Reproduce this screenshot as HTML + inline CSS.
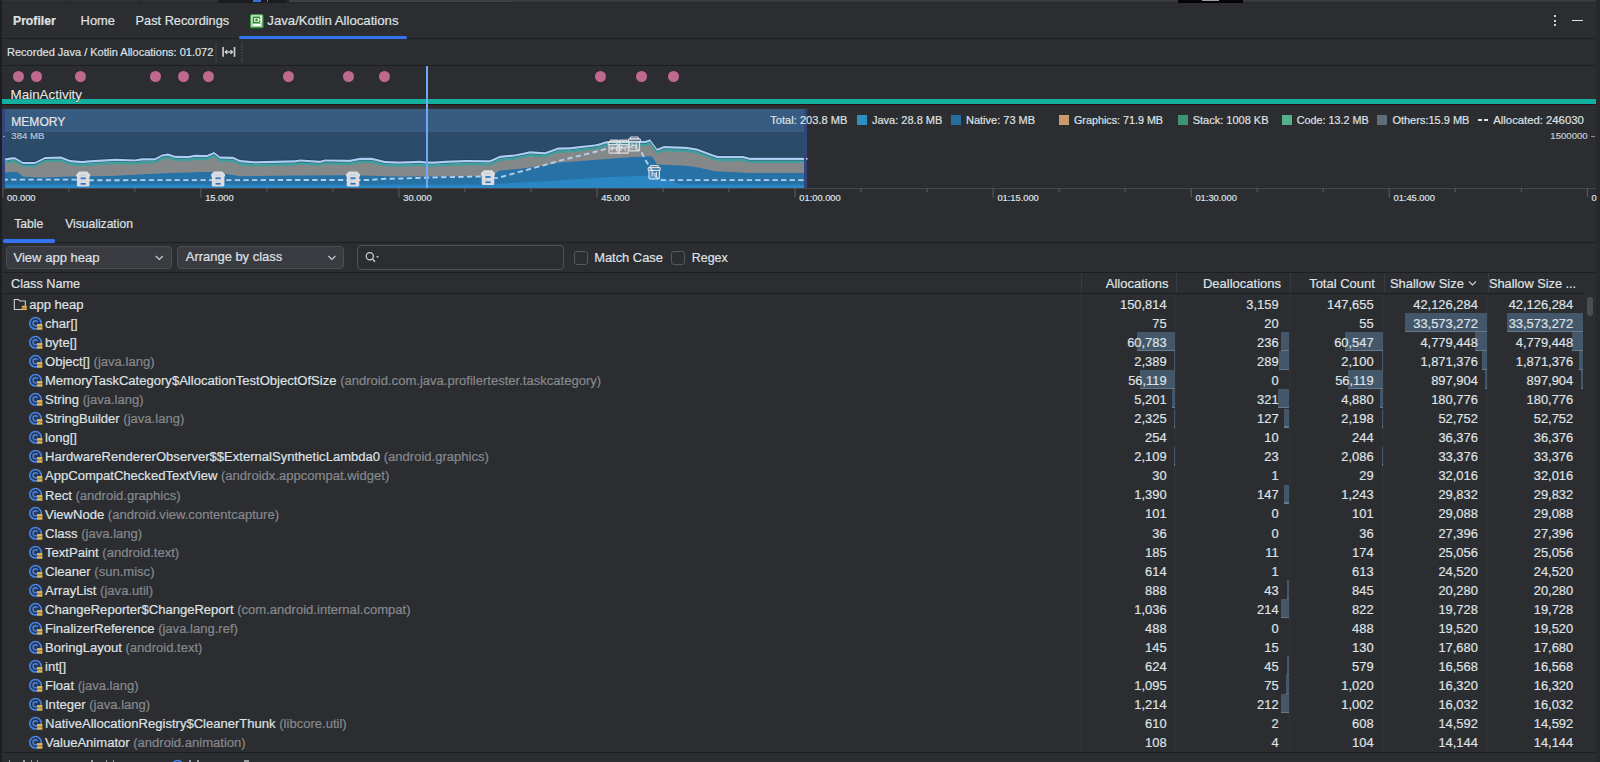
<!DOCTYPE html><html><head><meta charset="utf-8"><style>
html,body{margin:0;padding:0;}
body{width:1600px;height:762px;overflow:hidden;background:#2b2d30;position:relative;font-family:"Liberation Sans", sans-serif;}
.t{position:absolute;white-space:pre;line-height:1;-webkit-text-stroke:0.2px currentColor;}
.r{position:absolute;}
svg{position:absolute;left:0;top:0;}
</style></head><body>
<div class="r" style="left:0px;top:0px;width:1600px;height:3px;background:#25272a;"></div>
<div class="r" style="left:2px;top:0px;width:216px;height:2.4px;background:#2f3135;"></div>
<div class="r" style="left:70px;top:0px;width:1px;height:2.4px;background:#222326;"></div>
<div class="r" style="left:139px;top:0px;width:1px;height:2.4px;background:#222326;"></div>
<div class="r" style="left:218px;top:0px;width:69px;height:2.5px;background:#1c1d20;"></div>
<div class="r" style="left:253px;top:0px;width:8px;height:2.2px;background:#3a6fd8;"></div>
<div class="r" style="left:267px;top:0px;width:1px;height:2.2px;background:#d04040;"></div>
<div class="r" style="left:289px;top:0px;width:223px;height:2.4px;background:#3d3f43;"></div>
<div class="r" style="left:512px;top:0px;width:666px;height:2.4px;background:#393b3f;"></div>
<div class="r" style="left:1178px;top:0px;width:65px;height:2.6px;background:#050505;"></div>
<div class="r" style="left:1202px;top:0px;width:17px;height:1px;background:#a0a0a0;"></div>
<div class="r" style="left:1243px;top:0px;width:353px;height:2.4px;background:#393b3f;"></div>
<div class="r" style="left:0px;top:0px;width:2px;height:762px;background:#1e1f22;"></div>
<div class="r" style="left:1596px;top:0px;width:4px;height:762px;background:#26282b;"></div>
<div class="t" style="left:13px;top:15.02px;font-size:12.2px;color:#dfe1e5;font-weight:bold;">Profiler</div>
<div class="t" style="left:80.6px;top:14.93px;font-size:12.9px;color:#dfe1e5;font-weight:normal;">Home</div>
<div class="t" style="left:135.6px;top:14.96px;font-size:12.75px;color:#dfe1e5;font-weight:normal;">Past Recordings</div>
<div class="t" style="left:267.3px;top:13.98px;font-size:13.2px;color:#dfe1e5;font-weight:normal;">Java/Kotlin Allocations</div>
<div class="r" style="left:2px;top:38px;width:1594px;height:1px;background:#1e1f22;"></div>
<div class="r" style="left:239px;top:36px;width:168px;height:3px;background:#3574f0;border-radius:1.5px"></div>
<svg width="1600" height="40" style="left:0;top:0">
<rect x="250.6" y="14.6" width="12.3" height="13" rx="1.2" fill="#e9eee9" stroke="#3b9b3d" stroke-width="1.3"/>
<path d="M259.8 17.2 H253.4 V22.4 H259.8" fill="none" stroke="#2f8f33" stroke-width="1.5"/>
<circle cx="256.6" cy="19.8" r="1.3" fill="#2f8f33"/>
<rect x="259" y="17.8" width="1.4" height="1.4" fill="#2f8f33"/><rect x="259" y="20.6" width="1.4" height="1.4" fill="#2f8f33"/>
<rect x="252.2" y="23.6" width="9" height="2.8" fill="#ffffff" stroke="#5aaa5c" stroke-width="0.6"/>
</svg>
<div class="r" style="left:1554px;top:15px;width:2px;height:2px;background:#cfd1d5;"></div>
<div class="r" style="left:1554px;top:19.5px;width:2px;height:2px;background:#cfd1d5;"></div>
<div class="r" style="left:1554px;top:24px;width:2px;height:2px;background:#cfd1d5;"></div>
<div class="r" style="left:1572px;top:20px;width:11px;height:1.3px;background:#dfe1e5;"></div>
<div class="t" style="left:7px;top:46.62px;font-size:11.02px;color:#dfe1e5;font-weight:normal;">Recorded Java / Kotlin Allocations: 01.072</div>
<svg width="1600" height="70" style="left:0;top:0">
<line x1="216" y1="43" x2="216" y2="62" stroke="#5a5d63" stroke-width="1" stroke-dasharray="1.5 1.5"/>
<line x1="242" y1="43" x2="242" y2="62" stroke="#5a5d63" stroke-width="1" stroke-dasharray="1.5 1.5"/>
<line x1="223.1" y1="47" x2="223.1" y2="56.8" stroke="#c9cbcf" stroke-width="1.7"/>
<line x1="234.5" y1="47" x2="234.5" y2="56.8" stroke="#c9cbcf" stroke-width="1.7"/>
<line x1="225.5" y1="52" x2="232.3" y2="52" stroke="#dfe1e5" stroke-width="1.2"/>
<path d="M227.3 50.2 L225.3 52 L227.3 53.8 M230.5 50.2 L232.5 52 L230.5 53.8" fill="none" stroke="#dfe1e5" stroke-width="1.2"/>
</svg>
<div class="r" style="left:2px;top:65px;width:1594px;height:1px;background:#1e1f22;"></div>
<div class="r" style="left:13.2px;top:70.8px;width:11px;height:11px;background:#c0698f;border-radius:50%"></div>
<div class="r" style="left:31.0px;top:70.8px;width:11px;height:11px;background:#c0698f;border-radius:50%"></div>
<div class="r" style="left:75.3px;top:70.8px;width:11px;height:11px;background:#c0698f;border-radius:50%"></div>
<div class="r" style="left:149.5px;top:70.8px;width:11px;height:11px;background:#c0698f;border-radius:50%"></div>
<div class="r" style="left:177.5px;top:70.8px;width:11px;height:11px;background:#c0698f;border-radius:50%"></div>
<div class="r" style="left:203.0px;top:70.8px;width:11px;height:11px;background:#c0698f;border-radius:50%"></div>
<div class="r" style="left:282.5px;top:70.8px;width:11px;height:11px;background:#c0698f;border-radius:50%"></div>
<div class="r" style="left:342.5px;top:70.8px;width:11px;height:11px;background:#c0698f;border-radius:50%"></div>
<div class="r" style="left:379.0px;top:70.8px;width:11px;height:11px;background:#c0698f;border-radius:50%"></div>
<div class="r" style="left:595.0px;top:70.8px;width:11px;height:11px;background:#c0698f;border-radius:50%"></div>
<div class="r" style="left:636.0px;top:70.8px;width:11px;height:11px;background:#c0698f;border-radius:50%"></div>
<div class="r" style="left:668.0px;top:70.8px;width:11px;height:11px;background:#c0698f;border-radius:50%"></div>
<div class="r" style="left:2px;top:99px;width:1594px;height:5px;background:#13b0a0;"></div>
<div class="r" style="left:2px;top:104px;width:1594px;height:1px;background:#2a1119;"></div>
<div class="r" style="left:2px;top:108px;width:1594px;height:1px;background:#333230;"></div>
<div class="t" style="left:10.6px;top:88.41px;font-size:13.4px;color:#e6e7e9;font-weight:normal;text-shadow:0 0 1px #000,0 0 1px #000">MainActivity</div>
<svg width="1600" height="210" style="left:0;top:0"><rect x="5" y="109" width="799" height="23" fill="#375b81"/><rect x="5" y="132" width="799" height="56" fill="#2c4b69"/><polygon points="5,188 5.0,157.65 12.0,156.40 15.0,156.40 23.0,161.00 35.0,161.00 45.0,156.00 61.0,155.65 70.0,159.15 82.0,160.15 90.0,159.40 115.0,157.90 135.0,158.50 142.0,157.30 155.0,157.30 162.0,153.50 168.0,152.65 175.0,154.80 188.0,155.15 195.0,153.90 207.0,154.15 214.0,151.00 220.0,155.65 233.0,155.90 240.0,159.15 255.0,160.40 275.0,159.90 295.0,159.40 300.0,158.50 320.0,159.80 325.0,158.50 350.0,158.90 360.0,156.90 372.0,156.90 385.0,160.15 400.0,160.65 420.0,159.80 427.0,160.65 435.0,160.65 445.0,159.80 465.0,159.15 490.0,159.40 500.0,154.80 515.0,153.50 530.0,150.40 545.0,151.40 558.0,146.65 570.0,146.40 580.0,145.15 595.0,143.50 600.0,142.40 605.0,140.60 615.0,139.30 640.0,139.90 645.0,140.20 650.0,138.40 657.0,147.90 664.0,145.20 686.0,145.90 697.0,147.60 713.0,153.70 718.0,155.10 743.0,155.10 750.0,156.80 804.0,156.80 804,188" fill="#1e3d5e"/><polygon points="5,188 5.0,158.55 12.0,157.30 15.0,157.30 23.0,161.90 35.0,161.90 45.0,156.90 61.0,156.55 70.0,160.05 82.0,161.05 90.0,160.30 115.0,158.80 135.0,159.40 142.0,158.20 155.0,158.20 162.0,154.40 168.0,153.55 175.0,155.70 188.0,156.05 195.0,154.80 207.0,155.05 214.0,151.90 220.0,156.55 233.0,156.80 240.0,160.05 255.0,161.30 275.0,160.80 295.0,160.30 300.0,159.40 320.0,160.70 325.0,159.40 350.0,159.80 360.0,157.80 372.0,157.80 385.0,161.05 400.0,161.55 420.0,160.70 427.0,161.55 435.0,161.55 445.0,160.70 465.0,160.05 490.0,160.30 500.0,155.70 515.0,154.40 530.0,151.30 545.0,152.30 558.0,147.55 570.0,147.30 580.0,146.05 595.0,144.40 600.0,143.30 605.0,141.50 615.0,140.20 640.0,140.80 645.0,141.10 650.0,139.30 657.0,148.80 664.0,146.10 686.0,146.80 697.0,148.50 713.0,154.60 718.0,156.00 743.0,156.00 750.0,157.70 804.0,157.70 804,188" fill="#aacdf0"/><polygon points="5,188 5.0,160.75 12.0,159.50 15.0,159.50 23.0,164.10 35.0,164.10 45.0,159.10 61.0,158.75 70.0,162.25 82.0,163.25 90.0,162.50 115.0,161.00 135.0,161.60 142.0,160.40 155.0,160.40 162.0,156.60 168.0,155.75 175.0,157.90 188.0,158.25 195.0,157.00 207.0,157.25 214.0,154.10 220.0,158.75 233.0,159.00 240.0,162.25 255.0,163.50 275.0,163.00 295.0,162.50 300.0,161.60 320.0,162.90 325.0,161.60 350.0,162.00 360.0,160.00 372.0,160.00 385.0,163.25 400.0,163.75 420.0,162.90 427.0,163.75 435.0,163.75 445.0,162.90 465.0,162.25 490.0,162.50 500.0,157.90 515.0,156.60 530.0,153.50 545.0,154.50 558.0,149.75 570.0,149.50 580.0,148.25 595.0,146.60 600.0,145.50 605.0,143.70 615.0,142.40 640.0,143.00 645.0,143.30 650.0,141.50 657.0,151.00 664.0,148.30 686.0,149.00 697.0,150.70 713.0,156.80 718.0,158.20 743.0,158.20 750.0,159.90 804.0,159.90 804,188" fill="#2f5578"/><polygon points="5,188 5.0,161.35 12.0,160.10 15.0,160.10 23.0,164.70 35.0,164.70 45.0,159.70 61.0,159.35 70.0,162.85 82.0,163.85 90.0,163.10 115.0,161.60 135.0,162.20 142.0,161.00 155.0,161.00 162.0,157.20 168.0,156.35 175.0,158.50 188.0,158.85 195.0,157.60 207.0,157.85 214.0,154.70 220.0,159.35 233.0,159.60 240.0,162.85 255.0,164.10 275.0,163.60 295.0,163.10 300.0,162.20 320.0,163.50 325.0,162.20 350.0,162.60 360.0,160.60 372.0,160.60 385.0,163.85 400.0,164.35 420.0,163.50 427.0,164.35 435.0,164.35 445.0,163.50 465.0,162.85 490.0,163.10 500.0,158.50 515.0,157.20 530.0,154.10 545.0,155.10 558.0,150.35 570.0,150.10 580.0,148.85 595.0,147.20 600.0,146.10 605.0,144.30 615.0,143.00 640.0,143.60 645.0,143.90 650.0,142.10 657.0,151.60 664.0,148.90 686.0,149.60 697.0,151.30 713.0,157.40 718.0,158.80 743.0,158.80 750.0,160.50 804.0,160.50 804,188" fill="#3e9f9c"/><polygon points="5,188 5.0,163.75 12.0,162.50 15.0,162.50 23.0,167.10 35.0,167.10 45.0,162.10 61.0,161.75 70.0,165.25 82.0,166.25 90.0,165.50 115.0,164.00 135.0,164.60 142.0,163.40 155.0,163.40 162.0,159.60 168.0,158.75 175.0,160.90 188.0,161.25 195.0,160.00 207.0,160.25 214.0,157.10 220.0,161.75 233.0,162.00 240.0,165.25 255.0,166.50 275.0,166.00 295.0,165.50 300.0,164.60 320.0,165.90 325.0,164.60 350.0,165.00 360.0,163.00 372.0,163.00 385.0,166.25 400.0,166.75 420.0,165.90 427.0,166.75 435.0,166.75 445.0,165.90 465.0,165.25 490.0,165.50 500.0,160.90 515.0,159.60 530.0,156.50 545.0,157.50 558.0,152.75 570.0,152.50 580.0,151.25 595.0,149.60 600.0,148.50 605.0,146.70 615.0,145.40 640.0,146.00 645.0,146.30 650.0,144.50 657.0,154.00 664.0,151.30 686.0,152.00 697.0,153.70 713.0,159.80 718.0,161.20 743.0,161.20 750.0,162.90 804.0,162.90 804,188" fill="#858889"/><polygon points="5,188 5.0,172.50 12.0,171.90 17.0,172.00 23.0,176.50 40.0,177.50 70.0,176.60 110.0,176.00 140.0,174.40 170.0,173.10 190.0,172.50 200.0,171.90 215.0,172.00 240.0,176.25 300.0,175.60 350.0,175.25 400.0,176.50 490.0,176.25 500.0,170.60 520.0,168.75 545.0,165.60 558.0,162.75 600.0,159.40 630.0,157.20 652.0,156.20 657.0,164.40 685.0,165.70 697.0,167.30 715.0,171.20 750.0,172.90 804.0,172.90 804,188" fill="#2672a7"/><polygon points="5,188 5.0,184.50 400.0,184.75 480.0,184.80 560.0,180.60 600.0,177.50 650.0,175.60 657.0,176.00 680.0,184.50 804.0,184.70 804,188" fill="#2a87c4"/><polyline points="5.0,179.60 75.0,179.60 90.0,180.20 370.0,180.00 385.0,178.75 400.0,178.60 430.0,177.50 480.0,176.50 488.0,177.00 497.0,178.10 540.0,166.25 547.0,164.40 560.0,160.60 600.0,150.60 605.0,149.30 614.0,147.50 634.0,146.50 642.0,153.20 646.0,161.00 652.0,170.30 655.0,176.00 660.0,180.10 804.0,180.10" fill="none" stroke="#b3cfee" stroke-width="1.9" stroke-dasharray="5.2 3.4" stroke-dashoffset="2.35"/><rect x="2" y="109" width="3" height="79" fill="#32457c"/><rect x="804" y="109" width="3" height="79" fill="#32457c"/><rect x="806" y="158" width="1.5" height="1.5" fill="#dfe1e5"/><path d="M79.00 171.60 H87.40 L89.70 174.20 H90.20 V176.60 H89.50 V185.10 Q89.50 186.60 88.00 186.60 H78.40 Q76.90 186.60 76.90 185.10 V176.60 H76.20 V174.20 H76.70 Z" fill="#dcdde0"/><rect x="80.20" y="174.80" width="6" height="0.6" fill="#a9c2dc"/><rect x="80.60" y="177.40" width="5.2" height="1.9" fill="#3f7cc2"/><rect x="80.60" y="183.00" width="5.2" height="1.7" fill="#2f72c0"/><rect x="81.00" y="179.90" width="0.8" height="3.00" fill="#b4c8de"/><path d="M213.90 171.50 H222.30 L224.60 174.10 H225.10 V176.50 H224.40 V185.00 Q224.40 186.50 222.90 186.50 H213.30 Q211.80 186.50 211.80 185.00 V176.50 H211.10 V174.10 H211.60 Z" fill="#dcdde0"/><rect x="215.10" y="174.70" width="6" height="0.6" fill="#a9c2dc"/><rect x="215.50" y="177.30" width="5.2" height="1.9" fill="#3f7cc2"/><rect x="215.50" y="182.90" width="5.2" height="1.7" fill="#2f72c0"/><rect x="215.90" y="179.80" width="0.8" height="3.00" fill="#b4c8de"/><path d="M348.80 171.50 H357.20 L359.50 174.10 H360.00 V176.50 H359.30 V185.00 Q359.30 186.50 357.80 186.50 H348.20 Q346.70 186.50 346.70 185.00 V176.50 H346.00 V174.10 H346.50 Z" fill="#dcdde0"/><rect x="350.00" y="174.70" width="6" height="0.6" fill="#a9c2dc"/><rect x="350.40" y="177.30" width="5.2" height="1.9" fill="#3f7cc2"/><rect x="350.40" y="182.90" width="5.2" height="1.7" fill="#2f72c0"/><rect x="350.80" y="179.80" width="0.8" height="3.00" fill="#b4c8de"/><path d="M483.80 170.20 H492.20 L494.50 172.80 H495.00 V175.20 H494.30 V183.50 Q494.30 185.00 492.80 185.00 H483.20 Q481.70 185.00 481.70 183.50 V175.20 H481.00 V172.80 H481.50 Z" fill="#dcdde0"/><rect x="485.00" y="173.40" width="6" height="0.6" fill="#a9c2dc"/><rect x="485.40" y="176.00" width="5.2" height="1.9" fill="#3f7cc2"/><rect x="485.40" y="181.40" width="5.2" height="1.7" fill="#2f72c0"/><rect x="485.80" y="178.50" width="0.8" height="2.80" fill="#b4c8de"/><path d="M610.80 140.10 H617.60 L618.80 141.90 H609.60 Z" fill="none" stroke="#dcdde0" stroke-width="1.2" stroke-linejoin="round"/><rect x="608.20" y="142.10" width="12" height="2.6" rx="0.8" fill="none" stroke="#dcdde0" stroke-width="1.2"/><path d="M609.00 144.70 V152.20 Q609.00 153.20 610.20 153.20 H618.20 Q619.40 153.20 619.40 152.20 V144.70" fill="rgba(220,221,224,0.15)" stroke="#dcdde0" stroke-width="1.2"/><path d="M612.00 146.30 V151.00 M616.40 146.30 V151.00 M612.00 148.15 H616.40" stroke="#dcdde0" stroke-width="1.2" fill="none"/><path d="M619.70 140.10 H626.50 L627.70 141.90 H618.50 Z" fill="none" stroke="#dcdde0" stroke-width="1.2" stroke-linejoin="round"/><rect x="617.10" y="142.10" width="12" height="2.6" rx="0.8" fill="none" stroke="#dcdde0" stroke-width="1.2"/><path d="M617.90 144.70 V152.20 Q617.90 153.20 619.10 153.20 H627.10 Q628.30 153.20 628.30 152.20 V144.70" fill="rgba(220,221,224,0.15)" stroke="#dcdde0" stroke-width="1.2"/><path d="M620.90 146.30 V151.00 M625.30 146.30 V151.00 M620.90 148.15 H625.30" stroke="#dcdde0" stroke-width="1.2" fill="none"/><path d="M630.90 137.00 H637.70 L638.90 138.80 H629.70 Z" fill="none" stroke="#dcdde0" stroke-width="1.2" stroke-linejoin="round"/><rect x="628.30" y="139.00" width="12" height="2.6" rx="0.8" fill="none" stroke="#dcdde0" stroke-width="1.2"/><path d="M629.10 141.60 V149.90 Q629.10 150.90 630.30 150.90 H638.30 Q639.50 150.90 639.50 149.90 V141.60" fill="rgba(220,221,224,0.15)" stroke="#dcdde0" stroke-width="1.2"/><path d="M632.10 143.20 V148.70 M636.50 143.20 V148.70 M632.10 145.45 H636.50" stroke="#dcdde0" stroke-width="1.2" fill="none"/><path d="M650.80 165.70 H657.60 L658.80 167.50 H649.60 Z" fill="none" stroke="#dcdde0" stroke-width="1.2" stroke-linejoin="round"/><rect x="648.20" y="167.70" width="12" height="2.6" rx="0.8" fill="none" stroke="#dcdde0" stroke-width="1.2"/><path d="M649.00 170.30 V177.80 Q649.00 178.80 650.20 178.80 H658.20 Q659.40 178.80 659.40 177.80 V170.30" fill="rgba(220,221,224,0.15)" stroke="#dcdde0" stroke-width="1.2"/><path d="M652.00 171.90 V176.60 M656.40 171.90 V176.60 M652.00 173.75 H656.40" stroke="#dcdde0" stroke-width="1.2" fill="none"/><rect x="426" y="66" width="2" height="122.5" fill="#6fa8f4"/><rect x="2" y="188" width="1594" height="1" fill="#45474b"/><rect x="2.30" y="188" width="1" height="9.5" fill="#5b5e63"/><rect x="68.32" y="188" width="1" height="4.5" fill="#5b5e63"/><rect x="134.34" y="188" width="1" height="4.5" fill="#5b5e63"/><rect x="200.36" y="188" width="1" height="9.5" fill="#5b5e63"/><rect x="266.38" y="188" width="1" height="4.5" fill="#5b5e63"/><rect x="332.40" y="188" width="1" height="4.5" fill="#5b5e63"/><rect x="398.42" y="188" width="1" height="9.5" fill="#5b5e63"/><rect x="464.44" y="188" width="1" height="4.5" fill="#5b5e63"/><rect x="530.46" y="188" width="1" height="4.5" fill="#5b5e63"/><rect x="596.48" y="188" width="1" height="9.5" fill="#5b5e63"/><rect x="662.50" y="188" width="1" height="4.5" fill="#5b5e63"/><rect x="728.52" y="188" width="1" height="4.5" fill="#5b5e63"/><rect x="794.54" y="188" width="1" height="9.5" fill="#5b5e63"/><rect x="860.56" y="188" width="1" height="4.5" fill="#5b5e63"/><rect x="926.58" y="188" width="1" height="4.5" fill="#5b5e63"/><rect x="992.60" y="188" width="1" height="9.5" fill="#5b5e63"/><rect x="1058.62" y="188" width="1" height="4.5" fill="#5b5e63"/><rect x="1124.64" y="188" width="1" height="4.5" fill="#5b5e63"/><rect x="1190.66" y="188" width="1" height="9.5" fill="#5b5e63"/><rect x="1256.68" y="188" width="1" height="4.5" fill="#5b5e63"/><rect x="1322.70" y="188" width="1" height="4.5" fill="#5b5e63"/><rect x="1388.72" y="188" width="1" height="9.5" fill="#5b5e63"/><rect x="1454.74" y="188" width="1" height="4.5" fill="#5b5e63"/><rect x="1520.76" y="188" width="1" height="4.5" fill="#5b5e63"/><rect x="1586.78" y="188" width="1" height="9.5" fill="#5b5e63"/><rect x="1591" y="136" width="4" height="1" fill="#8a8d92"/><rect x="3" y="136" width="2" height="1" fill="#8ba6c4"/></svg>
<div class="t" style="left:11.2px;top:115.61px;font-size:12.1px;color:#e3e6ea;font-weight:normal;">MEMORY</div>
<div class="t" style="left:11.3px;top:131.42px;font-size:9.6px;color:#b7c6d6;font-weight:normal;">384 MB</div>
<div class="t" style="left:770.3px;top:114.75px;font-size:11.1px;color:#dfe1e5;font-weight:normal;">Total: 203.8 MB</div>
<div class="r" style="left:857px;top:115.3px;width:10px;height:9.5px;background:#2d8ec2;"></div>
<div class="t" style="left:872px;top:114.84px;font-size:11.0px;color:#dfe1e5;font-weight:normal;">Java: 28.8 MB</div>
<div class="r" style="left:951.3px;top:115.3px;width:10px;height:9.5px;background:#27709e;"></div>
<div class="t" style="left:966px;top:114.84px;font-size:11.0px;color:#dfe1e5;font-weight:normal;">Native: 73 MB</div>
<div class="r" style="left:1058.8px;top:115.3px;width:10px;height:9.5px;background:#c79a6b;"></div>
<div class="t" style="left:1074px;top:114.75px;font-size:10.75px;color:#dfe1e5;font-weight:normal;">Graphics: 71.9 MB</div>
<div class="r" style="left:1178px;top:115.3px;width:10px;height:9.5px;background:#3c9472;"></div>
<div class="t" style="left:1192.7px;top:114.84px;font-size:11.0px;color:#dfe1e5;font-weight:normal;">Stack: 1008 KB</div>
<div class="r" style="left:1282px;top:115.3px;width:10px;height:9.5px;background:#52b08c;"></div>
<div class="t" style="left:1296.8px;top:114.81px;font-size:10.8px;color:#dfe1e5;font-weight:normal;">Code: 13.2 MB</div>
<div class="r" style="left:1377px;top:115.3px;width:10px;height:9.5px;background:#5f6d79;"></div>
<div class="t" style="left:1392.4px;top:114.84px;font-size:11.0px;color:#dfe1e5;font-weight:normal;">Others:15.9 MB</div>
<div class="r" style="left:1477.6px;top:119px;width:4.5px;height:2px;background:#dfe1e5;"></div>
<div class="r" style="left:1483.8px;top:119px;width:4.5px;height:2px;background:#dfe1e5;"></div>
<div class="t" style="left:1493.3px;top:114.78px;font-size:11.3px;color:#dfe1e5;font-weight:normal;">Allocated: 246030</div>
<div class="t" style="left:1550.3px;top:131.42px;font-size:9.6px;color:#c9cbcf;font-weight:normal;">1500000</div>
<div class="t" style="left:7.1px;top:193.83px;font-size:9.3px;color:#dfe1e5;font-weight:normal;">00.000</div>
<div class="t" style="left:205.16000000000003px;top:193.83px;font-size:9.3px;color:#dfe1e5;font-weight:normal;">15.000</div>
<div class="t" style="left:403.22px;top:193.83px;font-size:9.3px;color:#dfe1e5;font-weight:normal;">30.000</div>
<div class="t" style="left:601.28px;top:193.83px;font-size:9.3px;color:#dfe1e5;font-weight:normal;">45.000</div>
<div class="t" style="left:799.3399999999999px;top:193.83px;font-size:9.3px;color:#dfe1e5;font-weight:normal;">01:00.000</div>
<div class="t" style="left:997.3999999999999px;top:193.83px;font-size:9.3px;color:#dfe1e5;font-weight:normal;">01:15.000</div>
<div class="t" style="left:1195.46px;top:193.83px;font-size:9.3px;color:#dfe1e5;font-weight:normal;">01:30.000</div>
<div class="t" style="left:1393.52px;top:193.83px;font-size:9.3px;color:#dfe1e5;font-weight:normal;">01:45.000</div>
<div class="t" style="left:1591.58px;top:193.83px;font-size:9.3px;color:#dfe1e5;font-weight:normal;">0</div>
<div class="t" style="left:14.2px;top:218.02px;font-size:12.2px;color:#dfe1e5;font-weight:normal;">Table</div>
<div class="t" style="left:65.2px;top:218.01px;font-size:12.1px;color:#dfe1e5;font-weight:normal;">Visualization</div>
<div class="r" style="left:2px;top:242px;width:1594px;height:1px;background:#1e1f22;"></div>
<div class="r" style="left:2.5px;top:239.3px;width:52.5px;height:3.3px;background:#3574f0;border-radius:1.6px"></div>
<div class="r" style="left:5.5px;top:246px;width:166px;height:22.5px;background:#393b40;box-sizing:border-box;border:1px solid #4b4d52;border-radius:4px"></div>
<div class="r" style="left:177px;top:246px;width:167px;height:22.5px;background:#393b40;box-sizing:border-box;border:1px solid #4b4d52;border-radius:4px"></div>
<div class="t" style="left:13.5px;top:250.50px;font-size:13.05px;color:#dfe1e5;font-weight:normal;">View app heap</div>
<div class="t" style="left:185.8px;top:251.39px;font-size:12.95px;color:#dfe1e5;font-weight:normal;">Arrange by class</div>
<svg width="1600" height="300" style="left:0;top:0">
<path d="M155.8 256 L159.3 259.5 L162.8 256" fill="none" stroke="#ced0d6" stroke-width="1.1"/>
<path d="M328.4 256 L331.9 259.5 L335.4 256" fill="none" stroke="#ced0d6" stroke-width="1.1"/>
<circle cx="369.8" cy="256.3" r="3.6" fill="none" stroke="#ced0d6" stroke-width="1.2"/>
<path d="M372.4 259 L375 261.7" stroke="#ced0d6" stroke-width="1.3"/>
<path d="M376 256.3 L379 256.3 L377.5 258 Z" fill="#ced0d6"/>
</svg>
<div class="r" style="left:356.5px;top:245px;width:207px;height:24.5px;background:transparent;box-sizing:border-box;border:1px solid #4e5157;border-radius:4px"></div>
<div class="r" style="left:574px;top:251px;width:13.5px;height:13.5px;background:transparent;box-sizing:border-box;border:1px solid #55585e;border-radius:3px"></div>
<div class="t" style="left:594.2px;top:251.73px;font-size:12.9px;color:#dfe1e5;font-weight:normal;">Match Case</div>
<div class="r" style="left:671px;top:251px;width:13.5px;height:13.5px;background:transparent;box-sizing:border-box;border:1px solid #55585e;border-radius:3px"></div>
<div class="t" style="left:691.8px;top:251.75px;font-size:12.4px;color:#dfe1e5;font-weight:normal;">Regex</div>
<div class="r" style="left:2px;top:272px;width:1594px;height:1px;background:#1e1f22;"></div>
<div class="t" style="left:11.0px;top:277.80px;font-size:12.7px;color:#dfe1e5;font-weight:normal;">Class Name</div>
<div class="r" style="left:1081px;top:273px;width:1px;height:21px;background:#393b40;"></div>
<div class="r" style="left:1176px;top:273px;width:1px;height:21px;background:#393b40;"></div>
<div class="r" style="left:1290px;top:273px;width:1px;height:21px;background:#393b40;"></div>
<div class="r" style="left:1384px;top:273px;width:1px;height:21px;background:#393b40;"></div>
<div class="r" style="left:1488px;top:273px;width:1px;height:21px;background:#393b40;"></div>
<div class="t" style="right:431.4000000000001px;top:277.05px;font-size:13.0px;color:#dfe1e5;">Allocations</div>
<div class="t" style="right:319px;top:277.05px;font-size:13.0px;color:#dfe1e5;">Deallocations</div>
<div class="t" style="right:225.0999999999999px;top:277.05px;font-size:13.0px;color:#dfe1e5;">Total Count</div>
<div class="t" style="left:1390px;top:277.93px;font-size:12.9px;color:#dfe1e5;font-weight:normal;">Shallow Size</div>
<svg width="1600" height="300" style="left:0;top:0"><path d="M1469 281.5 L1472.5 285 L1476 281.5" fill="none" stroke="#ced0d6" stroke-width="1.1"/></svg>
<div class="t" style="left:1489px;top:277.96px;font-size:12.75px;color:#dfe1e5;font-weight:normal;">Shallow Size ...</div>
<div class="r" style="left:2px;top:293px;width:1582px;height:1px;background:#1e1f22;"></div>
<div class="r" style="left:1080px;top:294px;width:1px;height:459px;background:#303236;"></div>
<div class="r" style="left:1175px;top:294px;width:1px;height:459px;background:#303236;"></div>
<div class="r" style="left:1289px;top:294px;width:1px;height:459px;background:#303236;"></div>
<div class="r" style="left:1383px;top:294px;width:1px;height:459px;background:#303236;"></div>
<div class="r" style="left:1487px;top:294px;width:1px;height:459px;background:#303236;"></div>
<div class="r" style="left:1404.91px;top:313.25px;width:82.09px;height:19.05px;background:#44576a;"></div>
<div class="r" style="left:1404.91px;top:330.85px;width:82.09px;height:1.45px;background:#65798b;"></div>
<div class="r" style="left:1507.29px;top:313.25px;width:75.71px;height:19.05px;background:#44576a;"></div>
<div class="r" style="left:1507.29px;top:330.85px;width:75.71px;height:1.45px;background:#65798b;"></div>
<div class="r" style="left:1137.11px;top:332.3px;width:37.89px;height:19.05px;background:#44576a;"></div>
<div class="r" style="left:1137.11px;top:349.9px;width:37.89px;height:1.45px;background:#65798b;"></div>
<div class="r" style="left:1280.56px;top:332.3px;width:8.44px;height:19.05px;background:#44576a;"></div>
<div class="r" style="left:1280.56px;top:349.9px;width:8.44px;height:1.45px;background:#65798b;"></div>
<div class="r" style="left:1344.86px;top:332.3px;width:38.14px;height:19.05px;background:#44576a;"></div>
<div class="r" style="left:1344.86px;top:349.9px;width:38.14px;height:1.45px;background:#65798b;"></div>
<div class="r" style="left:1475.31px;top:332.3px;width:11.69px;height:19.05px;background:#44576a;"></div>
<div class="r" style="left:1475.31px;top:349.9px;width:11.69px;height:1.45px;background:#65798b;"></div>
<div class="r" style="left:1572.22px;top:332.3px;width:10.78px;height:19.05px;background:#44576a;"></div>
<div class="r" style="left:1572.22px;top:349.9px;width:10.78px;height:1.45px;background:#65798b;"></div>
<div class="r" style="left:1173.51px;top:351.35px;width:1.49px;height:19.05px;background:#44576a;"></div>
<div class="r" style="left:1173.51px;top:368.95px;width:1.49px;height:1.45px;background:#65798b;"></div>
<div class="r" style="left:1278.66px;top:351.35px;width:10.34px;height:19.05px;background:#44576a;"></div>
<div class="r" style="left:1278.66px;top:368.95px;width:10.34px;height:1.45px;background:#65798b;"></div>
<div class="r" style="left:1381.68px;top:351.35px;width:1.32px;height:19.05px;background:#44576a;"></div>
<div class="r" style="left:1381.68px;top:368.95px;width:1.32px;height:1.45px;background:#65798b;"></div>
<div class="r" style="left:1482.42px;top:351.35px;width:4.58px;height:19.05px;background:#44576a;"></div>
<div class="r" style="left:1482.42px;top:368.95px;width:4.58px;height:1.45px;background:#65798b;"></div>
<div class="r" style="left:1578.78px;top:351.35px;width:4.22px;height:19.05px;background:#44576a;"></div>
<div class="r" style="left:1578.78px;top:368.95px;width:4.22px;height:1.45px;background:#65798b;"></div>
<div class="r" style="left:1140.02px;top:370.4px;width:34.98px;height:19.05px;background:#44576a;"></div>
<div class="r" style="left:1140.02px;top:388.0px;width:34.98px;height:1.45px;background:#65798b;"></div>
<div class="r" style="left:1347.65px;top:370.4px;width:35.35px;height:19.05px;background:#44576a;"></div>
<div class="r" style="left:1347.65px;top:388.0px;width:35.35px;height:1.45px;background:#65798b;"></div>
<div class="r" style="left:1484.8px;top:370.4px;width:2.2px;height:19.05px;background:#44576a;"></div>
<div class="r" style="left:1484.8px;top:388.0px;width:2.2px;height:1.45px;background:#65798b;"></div>
<div class="r" style="left:1580.98px;top:370.4px;width:2.02px;height:19.05px;background:#44576a;"></div>
<div class="r" style="left:1580.98px;top:388.0px;width:2.02px;height:1.45px;background:#65798b;"></div>
<div class="r" style="left:1171.76px;top:389.45px;width:3.24px;height:19.05px;background:#44576a;"></div>
<div class="r" style="left:1171.76px;top:407.05px;width:3.24px;height:1.45px;background:#65798b;"></div>
<div class="r" style="left:1277.52px;top:389.45px;width:11.48px;height:19.05px;background:#44576a;"></div>
<div class="r" style="left:1277.52px;top:407.05px;width:11.48px;height:1.45px;background:#65798b;"></div>
<div class="r" style="left:1379.93px;top:389.45px;width:3.07px;height:19.05px;background:#44576a;"></div>
<div class="r" style="left:1379.93px;top:407.05px;width:3.07px;height:1.45px;background:#65798b;"></div>
<div class="r" style="left:1173.55px;top:408.5px;width:1.45px;height:19.05px;background:#44576a;"></div>
<div class="r" style="left:1173.55px;top:426.1px;width:1.45px;height:1.45px;background:#65798b;"></div>
<div class="r" style="left:1284.46px;top:408.5px;width:4.54px;height:19.05px;background:#44576a;"></div>
<div class="r" style="left:1284.46px;top:426.1px;width:4.54px;height:1.45px;background:#65798b;"></div>
<div class="r" style="left:1381.62px;top:408.5px;width:1.38px;height:19.05px;background:#44576a;"></div>
<div class="r" style="left:1381.62px;top:426.1px;width:1.38px;height:1.45px;background:#65798b;"></div>
<div class="r" style="left:1173.69px;top:446.6px;width:1.31px;height:19.05px;background:#44576a;"></div>
<div class="r" style="left:1173.69px;top:464.2px;width:1.31px;height:1.45px;background:#65798b;"></div>
<div class="r" style="left:1381.69px;top:446.6px;width:1.31px;height:19.05px;background:#44576a;"></div>
<div class="r" style="left:1381.69px;top:464.2px;width:1.31px;height:1.45px;background:#65798b;"></div>
<div class="r" style="left:1283.74px;top:484.7px;width:5.26px;height:19.05px;background:#44576a;"></div>
<div class="r" style="left:1283.74px;top:502.3px;width:5.26px;height:1.45px;background:#65798b;"></div>
<div class="r" style="left:1287.46px;top:579.95px;width:1.54px;height:19.05px;background:#44576a;"></div>
<div class="r" style="left:1287.46px;top:597.55px;width:1.54px;height:1.45px;background:#65798b;"></div>
<div class="r" style="left:1281.35px;top:599.0px;width:7.65px;height:19.05px;background:#44576a;"></div>
<div class="r" style="left:1281.35px;top:616.6px;width:7.65px;height:1.45px;background:#65798b;"></div>
<div class="r" style="left:1287.39px;top:656.15px;width:1.61px;height:19.05px;background:#44576a;"></div>
<div class="r" style="left:1287.39px;top:673.75px;width:1.61px;height:1.45px;background:#65798b;"></div>
<div class="r" style="left:1286.32px;top:675.2px;width:2.68px;height:19.05px;background:#44576a;"></div>
<div class="r" style="left:1286.32px;top:692.8px;width:2.68px;height:1.45px;background:#65798b;"></div>
<div class="r" style="left:1281.42px;top:694.25px;width:7.58px;height:19.05px;background:#44576a;"></div>
<div class="r" style="left:1281.42px;top:711.85px;width:7.58px;height:1.45px;background:#65798b;"></div>
<svg width="30" height="20" style="left:10px;top:295.00px">
<path d="M4.3 4.5 H8.5 L10 6 H15.3 V14.5 H4.3 Z" fill="none" stroke="#ced0d6" stroke-width="1.1"/>
<rect x="11.8" y="10.8" width="5" height="4.2" fill="#e3b95c"/><rect x="11.8" y="12.6" width="5" height="0.8" fill="#6d5a2a"/>
</svg>
<div class="t" style="left:29.2px;top:298.00px;font-size:13.05px;color:#dfe1e5;font-weight:normal;">app heap</div>
<div class="t" style="right:433.4000000000001px;top:298.93px;font-size:12.9px;color:#dfe1e5;">150,814</div>
<div class="t" style="right:321.4000000000001px;top:298.93px;font-size:12.9px;color:#dfe1e5;">3,159</div>
<div class="t" style="right:226.4000000000001px;top:298.93px;font-size:12.9px;color:#dfe1e5;">147,655</div>
<div class="t" style="right:122.20000000000005px;top:298.93px;font-size:12.9px;color:#dfe1e5;">42,126,284</div>
<div class="t" style="right:26.799999999999955px;top:298.93px;font-size:12.9px;color:#dfe1e5;">42,126,284</div>
<svg width="16" height="18" style="left:28px;top:314.95px">
<circle cx="7.5" cy="8.3" r="5.8" fill="#27395a" stroke="#4a86e8" stroke-width="1.5"/>
<path d="M9.6 6.7 A2.6 2.6 0 1 0 9.6 9.9" fill="none" stroke="#4a86e8" stroke-width="1.4"/>
<rect x="9.1" y="9.1" width="5.3" height="5.6" fill="#e3b95c"/><rect x="9.1" y="11.5" width="5.3" height="0.8" fill="#6d5a2a"/>
</svg>
<div class="t" style="left:45px;top:317.05px;font-size:13.05px;color:#dfe1e5;font-weight:normal;">char[]</div>
<div class="t" style="right:433.4000000000001px;top:317.98px;font-size:12.9px;color:#dfe1e5;">75</div>
<div class="t" style="right:321.4000000000001px;top:317.98px;font-size:12.9px;color:#dfe1e5;">20</div>
<div class="t" style="right:226.4000000000001px;top:317.98px;font-size:12.9px;color:#dfe1e5;">55</div>
<div class="t" style="right:122.20000000000005px;top:317.98px;font-size:12.9px;color:#dfe1e5;">33,573,272</div>
<div class="t" style="right:26.799999999999955px;top:317.98px;font-size:12.9px;color:#dfe1e5;">33,573,272</div>
<svg width="16" height="18" style="left:28px;top:334.00px">
<circle cx="7.5" cy="8.3" r="5.8" fill="#27395a" stroke="#4a86e8" stroke-width="1.5"/>
<path d="M9.6 6.7 A2.6 2.6 0 1 0 9.6 9.9" fill="none" stroke="#4a86e8" stroke-width="1.4"/>
<rect x="9.1" y="9.1" width="5.3" height="5.6" fill="#e3b95c"/><rect x="9.1" y="11.5" width="5.3" height="0.8" fill="#6d5a2a"/>
</svg>
<div class="t" style="left:45px;top:336.10px;font-size:13.05px;color:#dfe1e5;font-weight:normal;">byte[]</div>
<div class="t" style="right:433.4000000000001px;top:337.03px;font-size:12.9px;color:#dfe1e5;">60,783</div>
<div class="t" style="right:321.4000000000001px;top:337.03px;font-size:12.9px;color:#dfe1e5;">236</div>
<div class="t" style="right:226.4000000000001px;top:337.03px;font-size:12.9px;color:#dfe1e5;">60,547</div>
<div class="t" style="right:122.20000000000005px;top:337.03px;font-size:12.9px;color:#dfe1e5;">4,779,448</div>
<div class="t" style="right:26.799999999999955px;top:337.03px;font-size:12.9px;color:#dfe1e5;">4,779,448</div>
<svg width="16" height="18" style="left:28px;top:353.05px">
<circle cx="7.5" cy="8.3" r="5.8" fill="#27395a" stroke="#4a86e8" stroke-width="1.5"/>
<path d="M9.6 6.7 A2.6 2.6 0 1 0 9.6 9.9" fill="none" stroke="#4a86e8" stroke-width="1.4"/>
<rect x="9.1" y="9.1" width="5.3" height="5.6" fill="#e3b95c"/><rect x="9.1" y="11.5" width="5.3" height="0.8" fill="#6d5a2a"/>
</svg>
<div class="t" style="left:45px;top:355.15px;font-size:13.05px;color:#dfe1e5">Object[] <span style="color:#86898e">(java.lang)</span></div>
<div class="t" style="right:433.4000000000001px;top:356.08px;font-size:12.9px;color:#dfe1e5;">2,389</div>
<div class="t" style="right:321.4000000000001px;top:356.08px;font-size:12.9px;color:#dfe1e5;">289</div>
<div class="t" style="right:226.4000000000001px;top:356.08px;font-size:12.9px;color:#dfe1e5;">2,100</div>
<div class="t" style="right:122.20000000000005px;top:356.08px;font-size:12.9px;color:#dfe1e5;">1,871,376</div>
<div class="t" style="right:26.799999999999955px;top:356.08px;font-size:12.9px;color:#dfe1e5;">1,871,376</div>
<svg width="16" height="18" style="left:28px;top:372.10px">
<circle cx="7.5" cy="8.3" r="5.8" fill="#27395a" stroke="#4a86e8" stroke-width="1.5"/>
<path d="M9.6 6.7 A2.6 2.6 0 1 0 9.6 9.9" fill="none" stroke="#4a86e8" stroke-width="1.4"/>
<rect x="9.1" y="9.1" width="5.3" height="5.6" fill="#e3b95c"/><rect x="9.1" y="11.5" width="5.3" height="0.8" fill="#6d5a2a"/>
</svg>
<div class="t" style="left:45px;top:374.20px;font-size:13.05px;color:#dfe1e5">MemoryTaskCategory$AllocationTestObjectOfSize <span style="color:#86898e">(android.com.java.profilertester.taskcategory)</span></div>
<div class="t" style="right:433.4000000000001px;top:375.13px;font-size:12.9px;color:#dfe1e5;">56,119</div>
<div class="t" style="right:321.4000000000001px;top:375.13px;font-size:12.9px;color:#dfe1e5;">0</div>
<div class="t" style="right:226.4000000000001px;top:375.13px;font-size:12.9px;color:#dfe1e5;">56,119</div>
<div class="t" style="right:122.20000000000005px;top:375.13px;font-size:12.9px;color:#dfe1e5;">897,904</div>
<div class="t" style="right:26.799999999999955px;top:375.13px;font-size:12.9px;color:#dfe1e5;">897,904</div>
<svg width="16" height="18" style="left:28px;top:391.15px">
<circle cx="7.5" cy="8.3" r="5.8" fill="#27395a" stroke="#4a86e8" stroke-width="1.5"/>
<path d="M9.6 6.7 A2.6 2.6 0 1 0 9.6 9.9" fill="none" stroke="#4a86e8" stroke-width="1.4"/>
<rect x="9.1" y="9.1" width="5.3" height="5.6" fill="#e3b95c"/><rect x="9.1" y="11.5" width="5.3" height="0.8" fill="#6d5a2a"/>
</svg>
<div class="t" style="left:45px;top:393.25px;font-size:13.05px;color:#dfe1e5">String <span style="color:#86898e">(java.lang)</span></div>
<div class="t" style="right:433.4000000000001px;top:394.18px;font-size:12.9px;color:#dfe1e5;">5,201</div>
<div class="t" style="right:321.4000000000001px;top:394.18px;font-size:12.9px;color:#dfe1e5;">321</div>
<div class="t" style="right:226.4000000000001px;top:394.18px;font-size:12.9px;color:#dfe1e5;">4,880</div>
<div class="t" style="right:122.20000000000005px;top:394.18px;font-size:12.9px;color:#dfe1e5;">180,776</div>
<div class="t" style="right:26.799999999999955px;top:394.18px;font-size:12.9px;color:#dfe1e5;">180,776</div>
<svg width="16" height="18" style="left:28px;top:410.20px">
<circle cx="7.5" cy="8.3" r="5.8" fill="#27395a" stroke="#4a86e8" stroke-width="1.5"/>
<path d="M9.6 6.7 A2.6 2.6 0 1 0 9.6 9.9" fill="none" stroke="#4a86e8" stroke-width="1.4"/>
<rect x="9.1" y="9.1" width="5.3" height="5.6" fill="#e3b95c"/><rect x="9.1" y="11.5" width="5.3" height="0.8" fill="#6d5a2a"/>
</svg>
<div class="t" style="left:45px;top:412.30px;font-size:13.05px;color:#dfe1e5">StringBuilder <span style="color:#86898e">(java.lang)</span></div>
<div class="t" style="right:433.4000000000001px;top:413.23px;font-size:12.9px;color:#dfe1e5;">2,325</div>
<div class="t" style="right:321.4000000000001px;top:413.23px;font-size:12.9px;color:#dfe1e5;">127</div>
<div class="t" style="right:226.4000000000001px;top:413.23px;font-size:12.9px;color:#dfe1e5;">2,198</div>
<div class="t" style="right:122.20000000000005px;top:413.23px;font-size:12.9px;color:#dfe1e5;">52,752</div>
<div class="t" style="right:26.799999999999955px;top:413.23px;font-size:12.9px;color:#dfe1e5;">52,752</div>
<svg width="16" height="18" style="left:28px;top:429.25px">
<circle cx="7.5" cy="8.3" r="5.8" fill="#27395a" stroke="#4a86e8" stroke-width="1.5"/>
<path d="M9.6 6.7 A2.6 2.6 0 1 0 9.6 9.9" fill="none" stroke="#4a86e8" stroke-width="1.4"/>
<rect x="9.1" y="9.1" width="5.3" height="5.6" fill="#e3b95c"/><rect x="9.1" y="11.5" width="5.3" height="0.8" fill="#6d5a2a"/>
</svg>
<div class="t" style="left:45px;top:431.35px;font-size:13.05px;color:#dfe1e5;font-weight:normal;">long[]</div>
<div class="t" style="right:433.4000000000001px;top:432.28px;font-size:12.9px;color:#dfe1e5;">254</div>
<div class="t" style="right:321.4000000000001px;top:432.28px;font-size:12.9px;color:#dfe1e5;">10</div>
<div class="t" style="right:226.4000000000001px;top:432.28px;font-size:12.9px;color:#dfe1e5;">244</div>
<div class="t" style="right:122.20000000000005px;top:432.28px;font-size:12.9px;color:#dfe1e5;">36,376</div>
<div class="t" style="right:26.799999999999955px;top:432.28px;font-size:12.9px;color:#dfe1e5;">36,376</div>
<svg width="16" height="18" style="left:28px;top:448.30px">
<circle cx="7.5" cy="8.3" r="5.8" fill="#27395a" stroke="#4a86e8" stroke-width="1.5"/>
<path d="M9.6 6.7 A2.6 2.6 0 1 0 9.6 9.9" fill="none" stroke="#4a86e8" stroke-width="1.4"/>
<rect x="9.1" y="9.1" width="5.3" height="5.6" fill="#e3b95c"/><rect x="9.1" y="11.5" width="5.3" height="0.8" fill="#6d5a2a"/>
</svg>
<div class="t" style="left:45px;top:450.40px;font-size:13.05px;color:#dfe1e5">HardwareRendererObserver$$ExternalSyntheticLambda0 <span style="color:#86898e">(android.graphics)</span></div>
<div class="t" style="right:433.4000000000001px;top:451.33px;font-size:12.9px;color:#dfe1e5;">2,109</div>
<div class="t" style="right:321.4000000000001px;top:451.33px;font-size:12.9px;color:#dfe1e5;">23</div>
<div class="t" style="right:226.4000000000001px;top:451.33px;font-size:12.9px;color:#dfe1e5;">2,086</div>
<div class="t" style="right:122.20000000000005px;top:451.33px;font-size:12.9px;color:#dfe1e5;">33,376</div>
<div class="t" style="right:26.799999999999955px;top:451.33px;font-size:12.9px;color:#dfe1e5;">33,376</div>
<svg width="16" height="18" style="left:28px;top:467.35px">
<circle cx="7.5" cy="8.3" r="5.8" fill="#27395a" stroke="#4a86e8" stroke-width="1.5"/>
<path d="M9.6 6.7 A2.6 2.6 0 1 0 9.6 9.9" fill="none" stroke="#4a86e8" stroke-width="1.4"/>
<rect x="9.1" y="9.1" width="5.3" height="5.6" fill="#e3b95c"/><rect x="9.1" y="11.5" width="5.3" height="0.8" fill="#6d5a2a"/>
</svg>
<div class="t" style="left:45px;top:469.45px;font-size:13.05px;color:#dfe1e5">AppCompatCheckedTextView <span style="color:#86898e">(androidx.appcompat.widget)</span></div>
<div class="t" style="right:433.4000000000001px;top:470.38px;font-size:12.9px;color:#dfe1e5;">30</div>
<div class="t" style="right:321.4000000000001px;top:470.38px;font-size:12.9px;color:#dfe1e5;">1</div>
<div class="t" style="right:226.4000000000001px;top:470.38px;font-size:12.9px;color:#dfe1e5;">29</div>
<div class="t" style="right:122.20000000000005px;top:470.38px;font-size:12.9px;color:#dfe1e5;">32,016</div>
<div class="t" style="right:26.799999999999955px;top:470.38px;font-size:12.9px;color:#dfe1e5;">32,016</div>
<svg width="16" height="18" style="left:28px;top:486.40px">
<circle cx="7.5" cy="8.3" r="5.8" fill="#27395a" stroke="#4a86e8" stroke-width="1.5"/>
<path d="M9.6 6.7 A2.6 2.6 0 1 0 9.6 9.9" fill="none" stroke="#4a86e8" stroke-width="1.4"/>
<rect x="9.1" y="9.1" width="5.3" height="5.6" fill="#e3b95c"/><rect x="9.1" y="11.5" width="5.3" height="0.8" fill="#6d5a2a"/>
</svg>
<div class="t" style="left:45px;top:488.50px;font-size:13.05px;color:#dfe1e5">Rect <span style="color:#86898e">(android.graphics)</span></div>
<div class="t" style="right:433.4000000000001px;top:489.43px;font-size:12.9px;color:#dfe1e5;">1,390</div>
<div class="t" style="right:321.4000000000001px;top:489.43px;font-size:12.9px;color:#dfe1e5;">147</div>
<div class="t" style="right:226.4000000000001px;top:489.43px;font-size:12.9px;color:#dfe1e5;">1,243</div>
<div class="t" style="right:122.20000000000005px;top:489.43px;font-size:12.9px;color:#dfe1e5;">29,832</div>
<div class="t" style="right:26.799999999999955px;top:489.43px;font-size:12.9px;color:#dfe1e5;">29,832</div>
<svg width="16" height="18" style="left:28px;top:505.45px">
<circle cx="7.5" cy="8.3" r="5.8" fill="#27395a" stroke="#4a86e8" stroke-width="1.5"/>
<path d="M9.6 6.7 A2.6 2.6 0 1 0 9.6 9.9" fill="none" stroke="#4a86e8" stroke-width="1.4"/>
<rect x="9.1" y="9.1" width="5.3" height="5.6" fill="#e3b95c"/><rect x="9.1" y="11.5" width="5.3" height="0.8" fill="#6d5a2a"/>
</svg>
<div class="t" style="left:45px;top:507.55px;font-size:13.05px;color:#dfe1e5">ViewNode <span style="color:#86898e">(android.view.contentcapture)</span></div>
<div class="t" style="right:433.4000000000001px;top:508.48px;font-size:12.9px;color:#dfe1e5;">101</div>
<div class="t" style="right:321.4000000000001px;top:508.48px;font-size:12.9px;color:#dfe1e5;">0</div>
<div class="t" style="right:226.4000000000001px;top:508.48px;font-size:12.9px;color:#dfe1e5;">101</div>
<div class="t" style="right:122.20000000000005px;top:508.48px;font-size:12.9px;color:#dfe1e5;">29,088</div>
<div class="t" style="right:26.799999999999955px;top:508.48px;font-size:12.9px;color:#dfe1e5;">29,088</div>
<svg width="16" height="18" style="left:28px;top:524.50px">
<circle cx="7.5" cy="8.3" r="5.8" fill="#27395a" stroke="#4a86e8" stroke-width="1.5"/>
<path d="M9.6 6.7 A2.6 2.6 0 1 0 9.6 9.9" fill="none" stroke="#4a86e8" stroke-width="1.4"/>
<rect x="9.1" y="9.1" width="5.3" height="5.6" fill="#e3b95c"/><rect x="9.1" y="11.5" width="5.3" height="0.8" fill="#6d5a2a"/>
</svg>
<div class="t" style="left:45px;top:526.60px;font-size:13.05px;color:#dfe1e5">Class <span style="color:#86898e">(java.lang)</span></div>
<div class="t" style="right:433.4000000000001px;top:527.53px;font-size:12.9px;color:#dfe1e5;">36</div>
<div class="t" style="right:321.4000000000001px;top:527.53px;font-size:12.9px;color:#dfe1e5;">0</div>
<div class="t" style="right:226.4000000000001px;top:527.53px;font-size:12.9px;color:#dfe1e5;">36</div>
<div class="t" style="right:122.20000000000005px;top:527.53px;font-size:12.9px;color:#dfe1e5;">27,396</div>
<div class="t" style="right:26.799999999999955px;top:527.53px;font-size:12.9px;color:#dfe1e5;">27,396</div>
<svg width="16" height="18" style="left:28px;top:543.55px">
<circle cx="7.5" cy="8.3" r="5.8" fill="#27395a" stroke="#4a86e8" stroke-width="1.5"/>
<path d="M9.6 6.7 A2.6 2.6 0 1 0 9.6 9.9" fill="none" stroke="#4a86e8" stroke-width="1.4"/>
<rect x="9.1" y="9.1" width="5.3" height="5.6" fill="#e3b95c"/><rect x="9.1" y="11.5" width="5.3" height="0.8" fill="#6d5a2a"/>
</svg>
<div class="t" style="left:45px;top:545.65px;font-size:13.05px;color:#dfe1e5">TextPaint <span style="color:#86898e">(android.text)</span></div>
<div class="t" style="right:433.4000000000001px;top:546.58px;font-size:12.9px;color:#dfe1e5;">185</div>
<div class="t" style="right:321.4000000000001px;top:546.58px;font-size:12.9px;color:#dfe1e5;">11</div>
<div class="t" style="right:226.4000000000001px;top:546.58px;font-size:12.9px;color:#dfe1e5;">174</div>
<div class="t" style="right:122.20000000000005px;top:546.58px;font-size:12.9px;color:#dfe1e5;">25,056</div>
<div class="t" style="right:26.799999999999955px;top:546.58px;font-size:12.9px;color:#dfe1e5;">25,056</div>
<svg width="16" height="18" style="left:28px;top:562.60px">
<circle cx="7.5" cy="8.3" r="5.8" fill="#27395a" stroke="#4a86e8" stroke-width="1.5"/>
<path d="M9.6 6.7 A2.6 2.6 0 1 0 9.6 9.9" fill="none" stroke="#4a86e8" stroke-width="1.4"/>
<rect x="9.1" y="9.1" width="5.3" height="5.6" fill="#e3b95c"/><rect x="9.1" y="11.5" width="5.3" height="0.8" fill="#6d5a2a"/>
</svg>
<div class="t" style="left:45px;top:564.70px;font-size:13.05px;color:#dfe1e5">Cleaner <span style="color:#86898e">(sun.misc)</span></div>
<div class="t" style="right:433.4000000000001px;top:565.63px;font-size:12.9px;color:#dfe1e5;">614</div>
<div class="t" style="right:321.4000000000001px;top:565.63px;font-size:12.9px;color:#dfe1e5;">1</div>
<div class="t" style="right:226.4000000000001px;top:565.63px;font-size:12.9px;color:#dfe1e5;">613</div>
<div class="t" style="right:122.20000000000005px;top:565.63px;font-size:12.9px;color:#dfe1e5;">24,520</div>
<div class="t" style="right:26.799999999999955px;top:565.63px;font-size:12.9px;color:#dfe1e5;">24,520</div>
<svg width="16" height="18" style="left:28px;top:581.65px">
<circle cx="7.5" cy="8.3" r="5.8" fill="#27395a" stroke="#4a86e8" stroke-width="1.5"/>
<path d="M9.6 6.7 A2.6 2.6 0 1 0 9.6 9.9" fill="none" stroke="#4a86e8" stroke-width="1.4"/>
<rect x="9.1" y="9.1" width="5.3" height="5.6" fill="#e3b95c"/><rect x="9.1" y="11.5" width="5.3" height="0.8" fill="#6d5a2a"/>
</svg>
<div class="t" style="left:45px;top:583.75px;font-size:13.05px;color:#dfe1e5">ArrayList <span style="color:#86898e">(java.util)</span></div>
<div class="t" style="right:433.4000000000001px;top:584.68px;font-size:12.9px;color:#dfe1e5;">888</div>
<div class="t" style="right:321.4000000000001px;top:584.68px;font-size:12.9px;color:#dfe1e5;">43</div>
<div class="t" style="right:226.4000000000001px;top:584.68px;font-size:12.9px;color:#dfe1e5;">845</div>
<div class="t" style="right:122.20000000000005px;top:584.68px;font-size:12.9px;color:#dfe1e5;">20,280</div>
<div class="t" style="right:26.799999999999955px;top:584.68px;font-size:12.9px;color:#dfe1e5;">20,280</div>
<svg width="16" height="18" style="left:28px;top:600.70px">
<circle cx="7.5" cy="8.3" r="5.8" fill="#27395a" stroke="#4a86e8" stroke-width="1.5"/>
<path d="M9.6 6.7 A2.6 2.6 0 1 0 9.6 9.9" fill="none" stroke="#4a86e8" stroke-width="1.4"/>
<rect x="9.1" y="9.1" width="5.3" height="5.6" fill="#e3b95c"/><rect x="9.1" y="11.5" width="5.3" height="0.8" fill="#6d5a2a"/>
</svg>
<div class="t" style="left:45px;top:602.80px;font-size:13.05px;color:#dfe1e5">ChangeReporter$ChangeReport <span style="color:#86898e">(com.android.internal.compat)</span></div>
<div class="t" style="right:433.4000000000001px;top:603.73px;font-size:12.9px;color:#dfe1e5;">1,036</div>
<div class="t" style="right:321.4000000000001px;top:603.73px;font-size:12.9px;color:#dfe1e5;">214</div>
<div class="t" style="right:226.4000000000001px;top:603.73px;font-size:12.9px;color:#dfe1e5;">822</div>
<div class="t" style="right:122.20000000000005px;top:603.73px;font-size:12.9px;color:#dfe1e5;">19,728</div>
<div class="t" style="right:26.799999999999955px;top:603.73px;font-size:12.9px;color:#dfe1e5;">19,728</div>
<svg width="16" height="18" style="left:28px;top:619.75px">
<circle cx="7.5" cy="8.3" r="5.8" fill="#27395a" stroke="#4a86e8" stroke-width="1.5"/>
<path d="M9.6 6.7 A2.6 2.6 0 1 0 9.6 9.9" fill="none" stroke="#4a86e8" stroke-width="1.4"/>
<rect x="9.1" y="9.1" width="5.3" height="5.6" fill="#e3b95c"/><rect x="9.1" y="11.5" width="5.3" height="0.8" fill="#6d5a2a"/>
</svg>
<div class="t" style="left:45px;top:621.85px;font-size:13.05px;color:#dfe1e5">FinalizerReference <span style="color:#86898e">(java.lang.ref)</span></div>
<div class="t" style="right:433.4000000000001px;top:622.78px;font-size:12.9px;color:#dfe1e5;">488</div>
<div class="t" style="right:321.4000000000001px;top:622.78px;font-size:12.9px;color:#dfe1e5;">0</div>
<div class="t" style="right:226.4000000000001px;top:622.78px;font-size:12.9px;color:#dfe1e5;">488</div>
<div class="t" style="right:122.20000000000005px;top:622.78px;font-size:12.9px;color:#dfe1e5;">19,520</div>
<div class="t" style="right:26.799999999999955px;top:622.78px;font-size:12.9px;color:#dfe1e5;">19,520</div>
<svg width="16" height="18" style="left:28px;top:638.80px">
<circle cx="7.5" cy="8.3" r="5.8" fill="#27395a" stroke="#4a86e8" stroke-width="1.5"/>
<path d="M9.6 6.7 A2.6 2.6 0 1 0 9.6 9.9" fill="none" stroke="#4a86e8" stroke-width="1.4"/>
<rect x="9.1" y="9.1" width="5.3" height="5.6" fill="#e3b95c"/><rect x="9.1" y="11.5" width="5.3" height="0.8" fill="#6d5a2a"/>
</svg>
<div class="t" style="left:45px;top:640.90px;font-size:13.05px;color:#dfe1e5">BoringLayout <span style="color:#86898e">(android.text)</span></div>
<div class="t" style="right:433.4000000000001px;top:641.83px;font-size:12.9px;color:#dfe1e5;">145</div>
<div class="t" style="right:321.4000000000001px;top:641.83px;font-size:12.9px;color:#dfe1e5;">15</div>
<div class="t" style="right:226.4000000000001px;top:641.83px;font-size:12.9px;color:#dfe1e5;">130</div>
<div class="t" style="right:122.20000000000005px;top:641.83px;font-size:12.9px;color:#dfe1e5;">17,680</div>
<div class="t" style="right:26.799999999999955px;top:641.83px;font-size:12.9px;color:#dfe1e5;">17,680</div>
<svg width="16" height="18" style="left:28px;top:657.85px">
<circle cx="7.5" cy="8.3" r="5.8" fill="#27395a" stroke="#4a86e8" stroke-width="1.5"/>
<path d="M9.6 6.7 A2.6 2.6 0 1 0 9.6 9.9" fill="none" stroke="#4a86e8" stroke-width="1.4"/>
<rect x="9.1" y="9.1" width="5.3" height="5.6" fill="#e3b95c"/><rect x="9.1" y="11.5" width="5.3" height="0.8" fill="#6d5a2a"/>
</svg>
<div class="t" style="left:45px;top:659.95px;font-size:13.05px;color:#dfe1e5;font-weight:normal;">int[]</div>
<div class="t" style="right:433.4000000000001px;top:660.88px;font-size:12.9px;color:#dfe1e5;">624</div>
<div class="t" style="right:321.4000000000001px;top:660.88px;font-size:12.9px;color:#dfe1e5;">45</div>
<div class="t" style="right:226.4000000000001px;top:660.88px;font-size:12.9px;color:#dfe1e5;">579</div>
<div class="t" style="right:122.20000000000005px;top:660.88px;font-size:12.9px;color:#dfe1e5;">16,568</div>
<div class="t" style="right:26.799999999999955px;top:660.88px;font-size:12.9px;color:#dfe1e5;">16,568</div>
<svg width="16" height="18" style="left:28px;top:676.90px">
<circle cx="7.5" cy="8.3" r="5.8" fill="#27395a" stroke="#4a86e8" stroke-width="1.5"/>
<path d="M9.6 6.7 A2.6 2.6 0 1 0 9.6 9.9" fill="none" stroke="#4a86e8" stroke-width="1.4"/>
<rect x="9.1" y="9.1" width="5.3" height="5.6" fill="#e3b95c"/><rect x="9.1" y="11.5" width="5.3" height="0.8" fill="#6d5a2a"/>
</svg>
<div class="t" style="left:45px;top:679.00px;font-size:13.05px;color:#dfe1e5">Float <span style="color:#86898e">(java.lang)</span></div>
<div class="t" style="right:433.4000000000001px;top:679.93px;font-size:12.9px;color:#dfe1e5;">1,095</div>
<div class="t" style="right:321.4000000000001px;top:679.93px;font-size:12.9px;color:#dfe1e5;">75</div>
<div class="t" style="right:226.4000000000001px;top:679.93px;font-size:12.9px;color:#dfe1e5;">1,020</div>
<div class="t" style="right:122.20000000000005px;top:679.93px;font-size:12.9px;color:#dfe1e5;">16,320</div>
<div class="t" style="right:26.799999999999955px;top:679.93px;font-size:12.9px;color:#dfe1e5;">16,320</div>
<svg width="16" height="18" style="left:28px;top:695.95px">
<circle cx="7.5" cy="8.3" r="5.8" fill="#27395a" stroke="#4a86e8" stroke-width="1.5"/>
<path d="M9.6 6.7 A2.6 2.6 0 1 0 9.6 9.9" fill="none" stroke="#4a86e8" stroke-width="1.4"/>
<rect x="9.1" y="9.1" width="5.3" height="5.6" fill="#e3b95c"/><rect x="9.1" y="11.5" width="5.3" height="0.8" fill="#6d5a2a"/>
</svg>
<div class="t" style="left:45px;top:698.05px;font-size:13.05px;color:#dfe1e5">Integer <span style="color:#86898e">(java.lang)</span></div>
<div class="t" style="right:433.4000000000001px;top:698.98px;font-size:12.9px;color:#dfe1e5;">1,214</div>
<div class="t" style="right:321.4000000000001px;top:698.98px;font-size:12.9px;color:#dfe1e5;">212</div>
<div class="t" style="right:226.4000000000001px;top:698.98px;font-size:12.9px;color:#dfe1e5;">1,002</div>
<div class="t" style="right:122.20000000000005px;top:698.98px;font-size:12.9px;color:#dfe1e5;">16,032</div>
<div class="t" style="right:26.799999999999955px;top:698.98px;font-size:12.9px;color:#dfe1e5;">16,032</div>
<svg width="16" height="18" style="left:28px;top:715.00px">
<circle cx="7.5" cy="8.3" r="5.8" fill="#27395a" stroke="#4a86e8" stroke-width="1.5"/>
<path d="M9.6 6.7 A2.6 2.6 0 1 0 9.6 9.9" fill="none" stroke="#4a86e8" stroke-width="1.4"/>
<rect x="9.1" y="9.1" width="5.3" height="5.6" fill="#e3b95c"/><rect x="9.1" y="11.5" width="5.3" height="0.8" fill="#6d5a2a"/>
</svg>
<div class="t" style="left:45px;top:717.10px;font-size:13.05px;color:#dfe1e5">NativeAllocationRegistry$CleanerThunk <span style="color:#86898e">(libcore.util)</span></div>
<div class="t" style="right:433.4000000000001px;top:718.03px;font-size:12.9px;color:#dfe1e5;">610</div>
<div class="t" style="right:321.4000000000001px;top:718.03px;font-size:12.9px;color:#dfe1e5;">2</div>
<div class="t" style="right:226.4000000000001px;top:718.03px;font-size:12.9px;color:#dfe1e5;">608</div>
<div class="t" style="right:122.20000000000005px;top:718.03px;font-size:12.9px;color:#dfe1e5;">14,592</div>
<div class="t" style="right:26.799999999999955px;top:718.03px;font-size:12.9px;color:#dfe1e5;">14,592</div>
<svg width="16" height="18" style="left:28px;top:734.05px">
<circle cx="7.5" cy="8.3" r="5.8" fill="#27395a" stroke="#4a86e8" stroke-width="1.5"/>
<path d="M9.6 6.7 A2.6 2.6 0 1 0 9.6 9.9" fill="none" stroke="#4a86e8" stroke-width="1.4"/>
<rect x="9.1" y="9.1" width="5.3" height="5.6" fill="#e3b95c"/><rect x="9.1" y="11.5" width="5.3" height="0.8" fill="#6d5a2a"/>
</svg>
<div class="t" style="left:45px;top:736.15px;font-size:13.05px;color:#dfe1e5">ValueAnimator <span style="color:#86898e">(android.animation)</span></div>
<div class="t" style="right:433.4000000000001px;top:737.08px;font-size:12.9px;color:#dfe1e5;">108</div>
<div class="t" style="right:321.4000000000001px;top:737.08px;font-size:12.9px;color:#dfe1e5;">4</div>
<div class="t" style="right:226.4000000000001px;top:737.08px;font-size:12.9px;color:#dfe1e5;">104</div>
<div class="t" style="right:122.20000000000005px;top:737.08px;font-size:12.9px;color:#dfe1e5;">14,144</div>
<div class="t" style="right:26.799999999999955px;top:737.08px;font-size:12.9px;color:#dfe1e5;">14,144</div>
<div class="r" style="left:1586.5px;top:297px;width:6.5px;height:19px;background:#4b4d51;border-radius:3.5px"></div>
<div class="r" style="left:2px;top:753px;width:1594px;height:9px;background:#2b2d30;"></div>
<div class="r" style="left:2px;top:752px;width:1594px;height:1px;background:#1e1f22;"></div>
<div class="r" style="left:8.700000000000001px;top:760px;width:1.3px;height:2px;background:#9a9ca0;"></div>
<div class="r" style="left:23.4px;top:760px;width:1.3px;height:2px;background:#9a9ca0;"></div>
<div class="r" style="left:30.7px;top:760px;width:1.3px;height:2px;background:#9a9ca0;"></div>
<div class="r" style="left:37.199999999999996px;top:760px;width:1.3px;height:2px;background:#9a9ca0;"></div>
<div class="r" style="left:91.30000000000001px;top:760px;width:1.3px;height:2px;background:#9a9ca0;"></div>
<div class="r" style="left:105.9px;top:760px;width:1.3px;height:2px;background:#9a9ca0;"></div>
<div class="r" style="left:113.2px;top:760px;width:1.3px;height:2px;background:#9a9ca0;"></div>
<div class="r" style="left:189.4px;top:760px;width:1.3px;height:2px;background:#9a9ca0;"></div>
<div class="r" style="left:197.4px;top:760px;width:1.3px;height:2px;background:#9a9ca0;"></div>
<div class="r" style="left:244px;top:760px;width:5px;height:2px;background:#9a9ca0;"></div>
<svg width="1600" height="762" style="left:0;top:0"><circle cx="177.5" cy="766" r="5.5" fill="#1e2a45" stroke="#4a86e8" stroke-width="1.5"/></svg>
</body></html>
